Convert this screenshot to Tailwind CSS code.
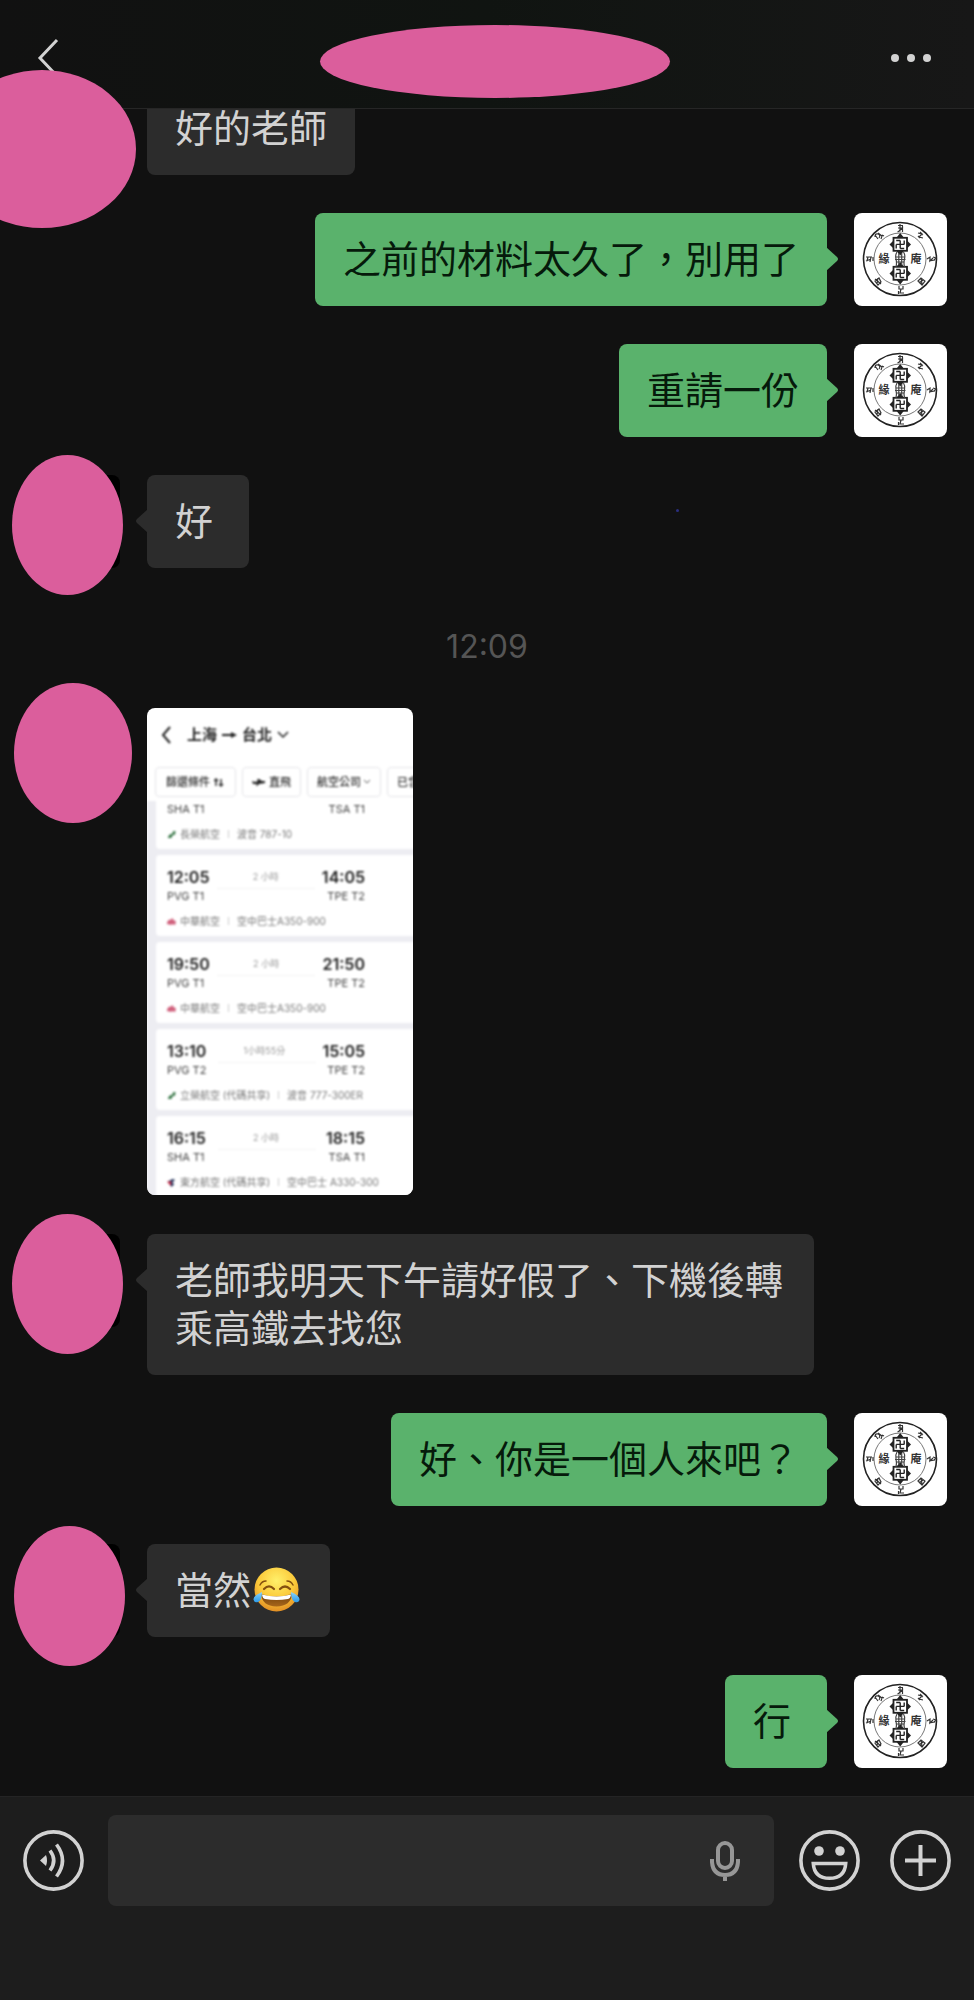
<!DOCTYPE html>
<html lang="zh-Hant-TW">
<head>
<meta charset="utf-8">
<meta name="viewport" content="width=device-width, initial-scale=1">
<title>聊天</title>
<script src="https://cdn.jsdelivr.net/npm/@tailwindcss/browser@4"></script>
</head>
<body class="bg-[#111111] font-['Inter','Noto_Sans_CJK_TC',sans-serif]">

<!-- Shared symbols -->
<svg class="hidden" aria-hidden="true">
  <symbol id="seal" viewBox="0 0 93 93">
    <g fill="none" stroke="#222">
      <circle cx="46" cy="46" r="36.5" stroke-width="1.6"/>
      <circle cx="46" cy="46" r="26" stroke="#666" stroke-width=".9"/>
      <g id="block" stroke-width="1.8">
        <rect x="39.500" y="24.800" width="13.500" height="13"/>
        <path stroke-width="1.400" d="M46.200 27.500v8M42.200 31.400h8M46.200 27.500h-4M50.200 31.400v-4M46.200 35.500h4M42.200 31.400v4"/>
        <path fill="#222" stroke="none" d="M46.200 20l4 5h-8zM46.200 42.500l4-5h-8zM35.500 31.400l4-4v8zM57 31.400l-4-4v8z"/>
      </g>
      <use href="#block" y="29"/>
      <path stroke="#444" stroke-width="1.200" d="M43 39q-2 3-1 7t0 8M49.500 39q2 3 1 7t0 8M44.800 40v12M47.700 40v12M42 44h8.500M41 46.500h10.500M42 49h8.500"/>
      <g stroke-width="1.200" stroke="#333">
        <path d="M44 12.500h5M46 11v7.500M44 15h4l-3 3M48.500 13v6M43.500 19l2-1"/>
        <path d="M64 20l4 1-3 3 4 1M66 19l3 3M64 23l2 2"/>
        <path d="M73 46l3-2v4l3-3M79 44l3 1-2 2M75 48l6-1"/>
        <path d="M64 68l3-3 4 3-3 4zM65 70l4-3M67 65l1 6"/>
        <path d="M45 73v3h4v-3M47 76l-1 4h4M44.500 78v3"/>
        <path d="M21 68l4-3 2 4-3 3zM21 66l6 5M24 65l-1 6"/>
        <path d="M12 44h6M14 44l-1 4M17 44l-1 5M12 48l5-2M19 44v4"/>
        <path d="M21 24q0-4 3-3t1 4M24 20l4 3-1 3M21 22l3 4M28 22l2 1"/>
      </g>
    </g>
    <g fill="#333" font-family="Noto Sans CJK TC, sans-serif" font-size="11" font-weight="700" text-anchor="middle">
      <text x="30" y="50">緣</text>
      <text x="62" y="50">庵</text>
    </g>
  </symbol>
  <symbol id="leaf" viewBox="0 0 10 10"><path fill="#3c7a4b" d="M1 8l2-3 3-1 1-3h2.500L9 5 6 6 5 9H1z"/></symbol>
  <symbol id="flower" viewBox="0 0 10 10"><path fill="#d0607c" d="M0 6l2-3 2 0 2-2 1 2 3 2-1 4-3-1-2 1-2-1-2 0z"/></symbol>
  <symbol id="swallow" viewBox="0 0 10 10"><path fill="#23345c" d="M1 4l5-3 3 1-3 3 2 2-3 3z"/><path fill="#d0304a" d="M0 4l5 0-1 5z"/></symbol>
  <symbol id="tail" viewBox="0 0 12 24"><path fill="currentColor" d="M12 0L1 10Q-1 12 1 14L12 24z"/></symbol>
</svg>

<div class="relative flex min-h-screen flex-col overflow-hidden">

  <header class="relative z-10 flex h-[109px] items-center justify-between border-b border-[#262626] bg-linear-to-r from-[#111111] via-[#101411] to-[#171717] px-9 pt-2">
    <button type="button" aria-label="返回" class="flex h-11 w-6 items-center justify-center text-[#d2d2d2]">
      <svg class="h-10 w-6" viewBox="0 0 24 40" fill="none" stroke="currentColor" stroke-width="3"><path d="M21 2L4 20l17 18"/></svg>
    </button>
    <button type="button" aria-label="更多" class="mr-[7px] flex h-11 items-center gap-2 text-[#d2d2d2]">
      <span class="size-2 rounded-full bg-current"></span>
      <span class="size-2 rounded-full bg-current"></span>
      <span class="size-2 rounded-full bg-current"></span>
    </button>
  </header>
  <div class="absolute top-[25px] left-[320px] z-20 h-[73px] w-[350px] rounded-[50%] bg-[#db5e9c]"></div>

  <main class="-mt-[27px] flex flex-1 flex-col gap-[38px] px-[27px] pb-[28px] text-[38px] leading-[48px] text-[#d2d2d2]">

    <div class="relative flex items-start gap-[27px]">
      <div class="size-[93px] shrink-0 rounded-lg bg-black"></div>
      <div class="absolute -top-3 -left-[79px] z-20 h-[158px] w-[188px] rounded-[50%] bg-[#db5e9c]"></div>
      <p class="relative min-w-[102px] max-w-[667px] rounded-lg bg-[#2c2c2c] px-7 pt-[22px] pb-[23px]">好的老師</p>
    </div>

    <div class="flex items-start justify-end gap-[27px] text-[#061a0b]">
      <p class="relative min-w-[102px] max-w-[667px] rounded-lg bg-[#5ab26c] px-7 pt-[22px] pb-[23px]">之前的材料太久了，別用了<svg class="absolute top-[34px] -right-[11px] h-6 w-3 rotate-180 text-[#5ab26c]"><use href="#tail"/></svg></p>
      <svg class="size-[93px] shrink-0 rounded-lg bg-white"><use href="#seal"/></svg>
    </div>

    <div class="flex items-start justify-end gap-[27px] text-[#061a0b]">
      <p class="relative min-w-[102px] max-w-[667px] rounded-lg bg-[#5ab26c] px-7 pt-[22px] pb-[23px]">重請一份<svg class="absolute top-[34px] -right-[11px] h-6 w-3 rotate-180 text-[#5ab26c]"><use href="#tail"/></svg></p>
      <svg class="size-[93px] shrink-0 rounded-lg bg-white"><use href="#seal"/></svg>
    </div>

    <div class="relative flex items-start gap-[27px]">
      <div class="size-[93px] shrink-0 rounded-lg bg-black"></div>
      <div class="absolute -top-5 -left-[15px] h-[140px] w-[111px] rounded-[50%] bg-[#db5e9c]"></div>
      <p class="relative min-w-[102px] max-w-[667px] rounded-lg bg-[#2c2c2c] px-7 pt-[22px] pb-[23px]"><svg class="absolute top-[34px] -left-[11px] h-6 w-3 text-[#2c2c2c]"><use href="#tail"/></svg>好</p>
      <div class="absolute top-[34px] left-[649px] size-[3px] rounded-full bg-[#2b2f80]"></div>
    </div>

    <time class="mt-[18px] block text-center text-[32px] leading-[46px] text-[#555555]">12:09</time>

    <div class="relative mb-px flex items-start gap-[27px]">
      <div class="size-[93px] shrink-0 rounded-lg bg-black"></div>
      <div class="absolute -top-[25px] -left-[13px] h-[140px] w-[118px] rounded-[50%] bg-[#db5e9c]"></div>

      <!-- Shared photo: flight list -->
      <figure class="h-[487px] w-[266px] overflow-hidden rounded-lg bg-white text-[10px] leading-[14px] text-[#777]">
        <div class="w-[300px] blur-[1px]">
          <div class="flex h-[59px] items-center gap-[5px] pb-[5px] pl-[14px] text-[15px] font-bold text-[#222]">
            <svg class="mr-[11px] h-[18px] w-[10px]" viewBox="0 0 10 18" fill="none" stroke="#222" stroke-width="2"><path d="M9 1L2 9l7 8"/></svg>
            <span>上海</span>
            <svg class="h-[10px] w-[15px]" viewBox="0 0 15 10" fill="#222"><path d="M0 4h9V2l6 3-6 3V6H0z"/></svg>
            <span>台北</span>
            <svg class="h-[8px] w-[12px]" viewBox="0 0 12 8" fill="none" stroke="#222" stroke-width="1.500"><path d="M1 1l5 5 5-5"/></svg>
          </div>
          <div class="flex gap-[6px] pb-1 pl-2 text-[11px] text-[#333]">
            <span class="flex h-[30px] w-[81px] items-center gap-[4px] rounded-[4px] border border-[#e4e4e8] pl-[10px] font-medium">篩選條件
              <svg class="h-[9px] w-[10px]" viewBox="0 0 10 9" fill="none" stroke="#333" stroke-width="1.500"><path d="M2 1v7M0 3l2-2 2 2M7 1v7M5 6l2 2 2-2"/></svg></span>
            <span class="flex h-[30px] w-[59px] items-center gap-[4px] rounded-[4px] border border-[#e4e4e8] pl-[9px] font-medium">
              <svg class="h-[8px] w-[13px]" viewBox="0 0 13 8" fill="#222"><path d="M0 3l3 1 3-1-1-2h2l3 2h3v2L7 6 5 8H4l1-2H1z"/></svg>直飛</span>
            <span class="flex h-[30px] w-[74px] items-center gap-[3px] rounded-[4px] border border-[#e4e4e8] pl-[9px] font-medium">航空公司
              <svg class="h-[4px] w-[6px]" viewBox="0 0 6 4" fill="none" stroke="#555"><path d="M0 0l3 3 3-3"/></svg></span>
            <span class="flex h-[30px] w-[60px] shrink-0 items-center rounded-[4px] border border-[#e4e4e8] pl-[9px] font-medium">已含</span>
          </div>

          <ul class="flex flex-col gap-[6px] bg-[#ededf2] pl-[9px]">
            <li class="rounded-b-[4px] bg-white pr-[82px] pb-2 pl-[11px]">
              <div class="flex justify-between text-[11px] leading-[16px] text-[#444]"><span>SHA T1</span><span>TSA T1</span></div>
              <div class="mt-[10px] flex items-center gap-[4px] whitespace-nowrap"><svg class="size-[9px] shrink-0"><use href="#leaf"/></svg><span>長榮航空</span><span class="mx-[4px] h-2 w-px shrink-0 bg-[#ccc]"></span><span>波音 787-10</span></div>
            </li>
            <li class="rounded-[4px] bg-white pt-3 pr-[82px] pb-2 pl-[11px]">
              <div class="flex items-center justify-between text-[16px] leading-[20px] font-semibold text-[#222]"><span>12:05</span><span class="text-[9px] font-normal text-[#999]">2 小時</span><span>14:05</span></div>
              <div class="mt-px flex justify-between text-[11px] leading-[16px] text-[#444]"><span>PVG T1</span><span class="h-px w-[98px] bg-[#f2f2f2]"></span><span>TPE T2</span></div>
              <div class="mt-[10px] flex items-center gap-[4px] whitespace-nowrap"><svg class="size-[9px] shrink-0"><use href="#flower"/></svg><span>中華航空</span><span class="mx-[4px] h-2 w-px shrink-0 bg-[#ccc]"></span><span>空中巴士A350-900</span></div>
            </li>
            <li class="rounded-[4px] bg-white pt-3 pr-[82px] pb-2 pl-[11px]">
              <div class="flex items-center justify-between text-[16px] leading-[20px] font-semibold text-[#222]"><span>19:50</span><span class="text-[9px] font-normal text-[#999]">2 小時</span><span>21:50</span></div>
              <div class="mt-px flex justify-between text-[11px] leading-[16px] text-[#444]"><span>PVG T1</span><span class="h-px w-[98px] bg-[#f2f2f2]"></span><span>TPE T2</span></div>
              <div class="mt-[10px] flex items-center gap-[4px] whitespace-nowrap"><svg class="size-[9px] shrink-0"><use href="#flower"/></svg><span>中華航空</span><span class="mx-[4px] h-2 w-px shrink-0 bg-[#ccc]"></span><span>空中巴士A350-900</span></div>
            </li>
            <li class="rounded-[4px] bg-white pt-3 pr-[82px] pb-2 pl-[11px]">
              <div class="flex items-center justify-between text-[16px] leading-[20px] font-semibold text-[#222]"><span>13:10</span><span class="text-[9px] font-normal text-[#999]">1小時55分</span><span>15:05</span></div>
              <div class="mt-px flex justify-between text-[11px] leading-[16px] text-[#444]"><span>PVG T2</span><span class="h-px w-[98px] bg-[#f2f2f2]"></span><span>TPE T2</span></div>
              <div class="mt-[10px] flex items-center gap-[4px] whitespace-nowrap"><svg class="size-[9px] shrink-0"><use href="#leaf"/></svg><span>立榮航空 (代碼共享)</span><span class="mx-[4px] h-2 w-px shrink-0 bg-[#ccc]"></span><span>波音 777-300ER</span></div>
            </li>
            <li class="rounded-[4px] bg-white pt-3 pr-[82px] pb-2 pl-[11px]">
              <div class="flex items-center justify-between text-[16px] leading-[20px] font-semibold text-[#222]"><span>16:15</span><span class="text-[9px] font-normal text-[#999]">2 小時</span><span>18:15</span></div>
              <div class="mt-px flex justify-between text-[11px] leading-[16px] text-[#444]"><span>SHA T1</span><span class="h-px w-[98px] bg-[#f2f2f2]"></span><span>TSA T1</span></div>
              <div class="mt-[10px] flex items-center gap-[4px] whitespace-nowrap"><svg class="size-[9px] shrink-0"><use href="#swallow"/></svg><span>東方航空 (代碼共享)</span><span class="mx-[4px] h-2 w-px shrink-0 bg-[#ccc]"></span><span>空中巴士 A330-300</span></div>
            </li>
          </ul>
        </div>
      </figure>
    </div>

    <div class="relative flex items-start gap-[27px]">
      <div class="size-[93px] shrink-0 rounded-lg bg-black"></div>
      <div class="absolute -top-5 -left-[15px] h-[140px] w-[111px] rounded-[50%] bg-[#db5e9c]"></div>
      <p class="relative min-w-[102px] max-w-[667px] rounded-lg bg-[#2c2c2c] px-7 pt-[22px] pb-[23px]"><svg class="absolute top-[34px] -left-[11px] h-6 w-3 text-[#2c2c2c]"><use href="#tail"/></svg>老師我明天下午請好假了、下機後轉乘高鐵去找您</p>
    </div>

    <div class="flex items-start justify-end gap-[27px] text-[#061a0b]">
      <p class="relative min-w-[102px] max-w-[667px] rounded-lg bg-[#5ab26c] px-7 pt-[22px] pb-[23px]">好、你是一個人來吧？<svg class="absolute top-[34px] -right-[11px] h-6 w-3 rotate-180 text-[#5ab26c]"><use href="#tail"/></svg></p>
      <svg class="size-[93px] shrink-0 rounded-lg bg-white"><use href="#seal"/></svg>
    </div>

    <div class="relative flex items-start gap-[27px]">
      <div class="size-[93px] shrink-0 rounded-lg bg-black"></div>
      <div class="absolute -top-[18px] -left-[13px] h-[140px] w-[111px] rounded-[50%] bg-[#db5e9c]"></div>
      <p class="relative flex min-w-[102px] items-center rounded-lg bg-[#2c2c2c] px-7 pt-[22px] pb-[23px]"><svg class="absolute top-[34px] -left-[11px] h-6 w-3 text-[#2c2c2c]"><use href="#tail"/></svg>當然
        <svg role="img" aria-label="笑到流淚" class="mx-[2px] h-[46px] w-[47px]" viewBox="0 0 47 46">
          <defs>
            <radialGradient id="face" cx=".5" cy=".3" r=".75"><stop offset="0" stop-color="#fff06a"/><stop offset=".55" stop-color="#fbc93a"/><stop offset="1" stop-color="#dd8420"/></radialGradient>
            <linearGradient id="mouth" x1="0" y1="0" x2="0" y2="1"><stop offset="0" stop-color="#70400c"/><stop offset="1" stop-color="#a8661a"/></linearGradient>
            <linearGradient id="tear" x1="0" y1="0" x2="0" y2="1"><stop offset="0" stop-color="#8ad4fa"/><stop offset="1" stop-color="#2b9ae8"/></linearGradient>
          </defs>
          <circle cx="23.500" cy="22.500" r="22" fill="url(#face)"/>
          <path d="M8 27q15 5 31 0-1 12-15.500 12.500Q9 39 8 27z" fill="url(#mouth)"/>
          <path d="M9 27.500q14.500 4 29 0-.5 4-3 4.500-11.500 2-23 0-2.500-.5-3-4.500z" fill="#fff"/>
          <g fill="none" stroke="#85500f" stroke-linecap="round"><path stroke-width="2.200" d="M11 22q5-5 10 0M27 22q5-5 10 0"/><path stroke-width="1.500" d="M7 18q2-4 6-4M40 18q-2-4-6-4"/></g>
          <path d="M9 25q0 8-4 10-4 1-4.500-2.500Q0 29 9 25zM38 25q0 8 4 10 4 1 4.500-2.500Q47 29 38 25z" fill="url(#tear)"/>
        </svg></p>
    </div>

    <div class="flex items-start justify-end gap-[27px] text-[#061a0b]">
      <p class="relative min-w-[102px] max-w-[667px] rounded-lg bg-[#5ab26c] px-7 pt-[22px] pb-[23px]">行<svg class="absolute top-[34px] -right-[11px] h-6 w-3 rotate-180 text-[#5ab26c]"><use href="#tail"/></svg></p>
      <svg class="size-[93px] shrink-0 rounded-lg bg-white"><use href="#seal"/></svg>
    </div>
  </main>

  <footer class="flex items-center border-t border-[#242424] bg-[#1d1d1d] px-[23px] pt-[18px] pb-[94px] text-[#d2d2d2]">
    <button type="button" aria-label="語音" class="mr-6 shrink-0">
      <svg class="size-[61px]" viewBox="0 0 61 61" fill="none" stroke="currentColor" stroke-width="3.600"><circle cx="30.500" cy="30.500" r="28.600"/><path d="M27 20.500q7.500 10 0 20M33.500 14.500q12 16 0 32"/><path fill="currentColor" stroke="none" d="M17 30.500l6-5.500q2 5.500 0 11z"/></svg>
    </button>
    <div class="flex h-[91px] min-w-0 flex-1 items-center rounded-lg bg-[#2c2c2c] pr-[33px]">
      <input type="text" aria-label="輸入訊息" class="h-full min-w-0 flex-1 bg-transparent pl-6 text-[38px] outline-none">
      <button type="button" aria-label="語音輸入" class="shrink-0 text-[#979797]">
        <svg class="h-[42px] w-8" viewBox="0 0 32 42" fill="none" stroke="currentColor" stroke-width="4"><rect x="9" y="3" width="14" height="25" rx="7"/><path d="M3 19v3q1 13 13 13t13-13v-3M16 35v6"/></svg>
      </button>
    </div>
    <button type="button" aria-label="表情" class="ml-[25px] shrink-0">
      <svg class="size-[61px]" viewBox="0 0 61 61" fill="none" stroke="currentColor" stroke-width="3.600"><circle cx="30.500" cy="30.500" r="28.600"/><circle cx="20" cy="21" r="4.800" fill="currentColor" stroke="none"/><circle cx="41" cy="21" r="4.800" fill="currentColor" stroke="none"/><path d="M14.300 33.500h32.400q-1 14.800-16.200 14.800T14.300 33.500z"/></svg>
    </button>
    <button type="button" aria-label="更多功能" class="ml-[30px] shrink-0">
      <svg class="size-[61px]" viewBox="0 0 61 61" fill="none" stroke="currentColor" stroke-width="3.600"><circle cx="30.500" cy="30.500" r="28.600"/><path stroke-width="4" d="M30.500 15v31M15 30.500h31"/></svg>
    </button>
  </footer>
</div>
</body>
</html>
